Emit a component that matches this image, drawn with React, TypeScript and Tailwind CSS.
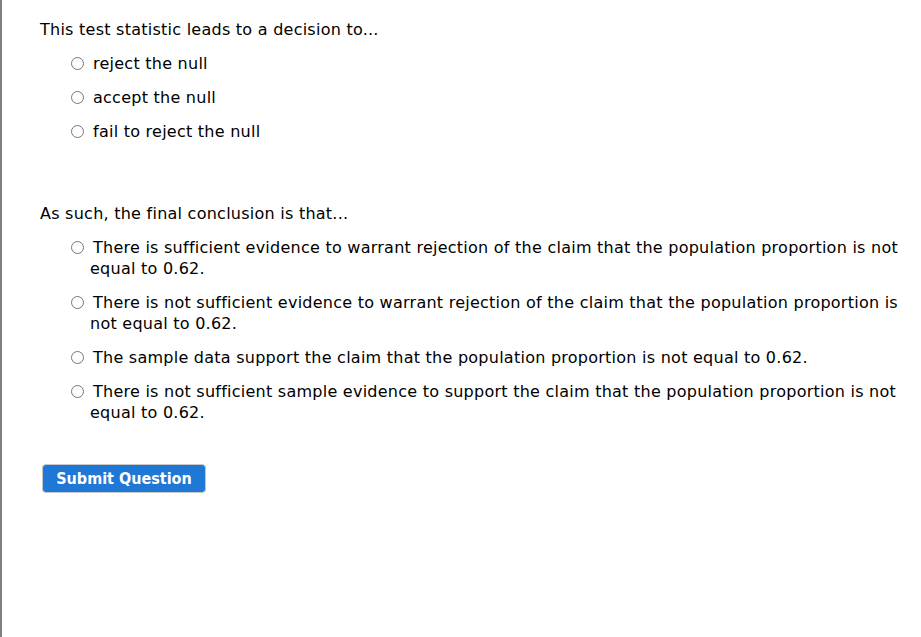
import React from 'react';

const first = ['reject the null', 'accept the null', 'fail to reject the null'];

const second = [
  'There is sufficient evidence to warrant rejection of the claim that the population proportion is not equal to 0.62.',
  'There is not sufficient evidence to warrant rejection of the claim that the population proportion is not equal to 0.62.',
  'The sample data support the claim that the population proportion is not equal to 0.62.',
  'There is not sufficient sample evidence to support the claim that the population proportion is not equal to 0.62.',
];

const Radio = () => (
  <span className="inline-block w-[13px] h-[13px] rounded-full border border-[#767676] bg-white align-[-1px] mr-[9px] indent-0" />
);

export default function App() {
  return (
    <div
      className="min-h-[637px] w-[921px] bg-white border-l-2 border-[#808080] text-[16px] text-black tracking-[0.25px]"
      style={{ fontFamily: '"DejaVu Sans", sans-serif' }}
    >
      <div className="pl-[38px] pt-[19px] pr-[16px]">
        <p className="leading-[21px]">This test statistic leads to a decision to...</p>
        <div className="mt-[13px] flex flex-col gap-[13px]">
          {first.map((t) => (
            <div key={t} className="pl-[50px] -indent-[19px] leading-[21px]">
              <Radio />
              {t}
            </div>
          ))}
        </div>

        <p className="mt-[61px] leading-[21px]">As such, the final conclusion is that...</p>
        <div className="mt-[13px] flex flex-col gap-[13px]">
          {second.map((t) => (
            <div key={t} className="pl-[50px] -indent-[19px] leading-[21px]">
              <Radio />
              {t}
            </div>
          ))}
        </div>

        <button
          className="mt-[41px] ml-[2px] h-[29px] w-[164px] rounded-[4px] bg-[#1f78d6] border border-[#c8c8c8] text-white text-[16px] font-bold tracking-normal"
          style={{ fontFamily: '"DejaVu Sans Condensed", "DejaVu Sans", sans-serif' }}
        >
          Submit Question
        </button>
      </div>
    </div>
  );
}
